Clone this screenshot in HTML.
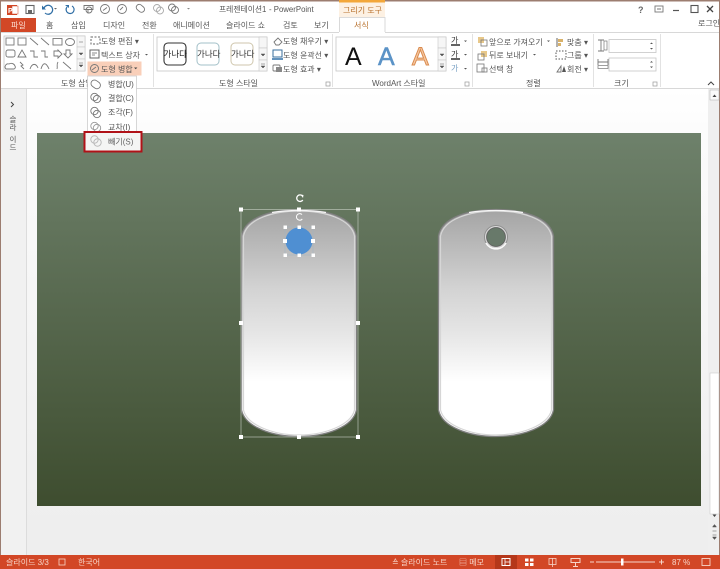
<!DOCTYPE html>
<html lang="ko"><head><meta charset="utf-8"><title>PowerPoint</title>
<style>
html,body{margin:0;padding:0;background:#fff}
svg{display:block;position:absolute;left:0;top:0;filter:blur(.35px)}
text{font-family:"Liberation Sans","Noto Sans CJK KR",sans-serif;font-size:8px;fill:#555}
.ic{fill:none;stroke:#777;stroke-width:.9}
</style></head><body>
<div style="position:relative;width:720px;height:569px;overflow:hidden">
<svg width="720" height="569" viewBox="0 0 720 569">
<defs>
<linearGradient id="sl" x1="0" y1="0" x2="0" y2="1"><stop offset="0" stop-color="#6e816b"/><stop offset="1" stop-color="#3e4d2f"/></linearGradient>
<linearGradient id="bg" x1="0" y1="0" x2="0" y2="1"><stop offset="0" stop-color="#fff"/><stop offset=".12" stop-color="#fbfbfb"/><stop offset=".95" stop-color="#eeeeee"/></linearGradient>
<linearGradient id="tag" x1="0" y1="0" x2="0" y2="1"><stop offset="0" stop-color="#a4a4a4"/><stop offset=".35" stop-color="#d3d3d3"/><stop offset=".55" stop-color="#e6e6e6"/><stop offset=".76" stop-color="#ffffff"/><stop offset="1" stop-color="#ffffff"/></linearGradient>
</defs>
<rect width="720" height="569" fill="#fff"/>
<rect x="0" y="0" width="720" height="1.500" fill="#9c7d70"/>
<rect x="0" y="0" width="1" height="569" fill="#9c7d70"/>
<rect x="719" y="0" width="1" height="569" fill="#9c7d70"/>

<!-- work area -->
<rect x="1" y="89" width="718" height="466" fill="url(#bg)"/>
<rect x="1" y="89" width="25" height="466" fill="#f1f1f1"/>
<rect x="26" y="89" width="1" height="466" fill="#dcdcdc"/>
<rect x="708" y="89" width="11" height="466" fill="#efefef"/>
<rect x="1" y="88" width="718" height="1" fill="#d8d8d8"/>
<rect x="710" y="373" width="9" height="141" fill="#fff" stroke="#ccc" stroke-width=".6"/>
<rect x="710" y="90" width="9" height="10" fill="#fafafa" stroke="#aaa" stroke-width=".5"/>
<path d="M712.500 97l2-2.500 2 2.500z" fill="#444"/>
<path d="M712.500 514.500l2 2.500 2-2.500z" fill="#444"/>
<path d="M712.500 527l2-2.500 2 2.500zM712.500 531h4" fill="#555" stroke="#555" stroke-width=".5"/>
<path d="M712.500 535h4M712.500 537l2 2.500 2-2.500z" fill="#555" stroke="#555" stroke-width=".5"/>

<!-- left thumb panel -->
<path d="M11 102l2.500 2.500-2.500 2.500" fill="none" stroke="#444" stroke-width="1"/>
<text style="font-size:7.500px">
<tspan x="9.500" y="122">슬</tspan><tspan x="9.500" y="130">라</tspan><tspan x="9.500" y="142">이</tspan><tspan x="9.500" y="150">드</tspan></text>

<!-- slide -->
<rect x="37" y="133" width="664" height="373" fill="url(#sl)"/>

<!-- left tag -->
<path d="M241.500 236C245 217 272 209.500 299 209.500C326 209.500 353 217 356.500 236V410C353 427 326 436.500 299 436.500C272 436.500 245 427 241.500 410Z" fill="url(#tag)" stroke="#7f7f7f" stroke-width="1.300"/>
<path d="M243.500 236C247 219 273 211 299 211C325 211 351 219 354.500 236V410C351 425 325 435 299 435C273 435 247 425 243.500 410Z" fill="none" stroke="#d6d6d6" stroke-width="1.200"/>
<path d="M272 212.500C281 211 290 210.500 299 210.500C308 210.500 317 211 326 212.500" fill="none" stroke="#f6f6f6" stroke-width="1.200"/>
<!-- selection -->
<rect x="241" y="209.500" width="117" height="227.500" fill="none" stroke="#c8cfc6" stroke-width=".6"/>
<circle cx="299" cy="241" r="13.500" fill="#4f8fd2"/>
<rect x="285" y="227" width="28" height="28" fill="none" stroke="#9fb4c4" stroke-width=".5"/>
<g fill="#fff">
<rect x="239" y="207.500" width="4" height="4"/><rect x="297" y="207.500" width="4" height="4"/><rect x="356" y="207.500" width="4" height="4"/>
<rect x="239" y="321" width="4" height="4"/><rect x="356" y="321" width="4" height="4"/>
<rect x="239" y="435" width="4" height="4"/><rect x="297" y="435" width="4" height="4"/><rect x="356" y="435" width="4" height="4"/>
<rect x="283.500" y="225.500" width="3.500" height="3.500"/><rect x="297.500" y="225.500" width="3.500" height="3.500"/><rect x="311.500" y="225.500" width="3.500" height="3.500"/>
<rect x="283" y="239" width="4" height="4"/><rect x="311" y="239" width="4" height="4"/>
<rect x="283.500" y="253.500" width="3.500" height="3.500"/><rect x="297.500" y="253.500" width="3.500" height="3.500"/><rect x="311.500" y="253.500" width="3.500" height="3.500"/>
</g>
<path d="M302.500 196A3.300 3.300 0 1 0 302.800 200" fill="none" stroke="#fff" stroke-width="1.300"/><path d="M300.500 194.500l3 .5-.5 3z" fill="#fff"/>
<path d="M302 214.500A3.300 3.300 0 1 0 302.300 219" fill="none" stroke="#fff" stroke-width="1"/>

<!-- right tag -->
<path d="M438.500 236C442 217 469 209.500 496 209.500C523 209.500 550 217 553.500 236V410C550 427 523 436.500 496 436.500C469 436.500 442 427 438.500 410Z" fill="url(#tag)" stroke="#7f7f7f" stroke-width="1.300"/>
<path d="M440.500 236C444 219 470 211 496 211C522 211 548 219 551.500 236V410C548 425 522 435 496 435C470 435 444 425 440.500 410Z" fill="none" stroke="#d6d6d6" stroke-width="1.200"/>
<path d="M469 212.500C478 211 487 210.500 496 210.500C505 210.500 514 211 523 212.500" fill="none" stroke="#f6f6f6" stroke-width="1.200"/>
<circle cx="496" cy="237" r="12" fill="#8f8f8f"/>
<path d="M486 243a11.500 11.500 0 0 0 20 0" fill="none" stroke="#fafafa" stroke-width="1.600"/>
<circle cx="496" cy="237" r="10.500" fill="none" stroke="#dcdcdc" stroke-width="1"/>
<circle cx="496" cy="237" r="9.300" fill="#68796a" stroke="#5a5a5a" stroke-width=".6"/>

<!-- status bar -->
<rect x="0" y="555" width="720" height="14" fill="#d24726"/>
<g>
<text x="6" y="565" style="fill:#f6d5c9">슬라이드 3/3</text>
<rect x="59" y="559" width="6" height="6" fill="none" stroke="#f6d5c9" stroke-width=".8"/>
<text x="78" y="565" style="fill:#f6d5c9">한국어</text>
<text x="392" y="565" style="fill:#f6d5c9">≙ 슬라이드 노트</text>
<text x="459" y="565" style="fill:#f6d5c9">▤ 메모</text>
<rect x="495" y="555" width="22" height="14" fill="#b5371a"/>
<rect x="502" y="558.500" width="8" height="7" fill="none" stroke="#fff" stroke-width="1"/><path d="M505 559v6M505 562h5" stroke="#fff" stroke-width=".8"/>
<path d="M525 558.500h3.500v3h-3.500zM530 558.500h3.500v3h-3.500zM525 563h3.500v3h-3.500zM530 563h3.500v3h-3.500z" fill="#fff"/>
<rect x="549" y="558.500" width="7" height="6" fill="none" stroke="#f6d5c9" stroke-width=".8"/><path d="M552.500 558v9" stroke="#f6d5c9" stroke-width=".8"/>
<path d="M571 558.500h9v4h-9zM575.500 562.500v4M573 566.500h5" fill="none" stroke="#f6d5c9" stroke-width="1"/>
<path d="M590 562h4M596 562h59M659 562h5M661.500 559.500v5" stroke="#f6d5c9" stroke-width="1"/>
<rect x="621" y="558.500" width="2.500" height="7" fill="#fff"/>
<text x="672" y="565" style="fill:#f6d5c9">87 %</text>
<rect x="702" y="558.500" width="8" height="7" fill="none" stroke="#f6d5c9" stroke-width=".9"/>
</g>

<!-- title bar -->
<rect x="7" y="5" width="10" height="10" fill="#d24726"/><rect x="12" y="6" width="6" height="8" fill="#fff" stroke="#d24726" stroke-width=".5"/>
<text x="8" y="13" style="fill:#fff;font-size:7px;font-weight:bold">P</text>
<rect x="26" y="5.500" width="8" height="8" fill="none" stroke="#666" stroke-width="1.100"/><rect x="28" y="10" width="4" height="3.500" fill="#666"/>
<path d="M44 8a4.500 4.500 0 1 1 1 5" fill="none" stroke="#2f6ea5" stroke-width="1.200"/><path d="M42 5.500v4h4z" fill="#2f6ea5"/><path d="M54 8l1.500 1.500L57 8z" fill="#666"/>
<path d="M72 6a4 4 0 1 1-5 1" fill="none" stroke="#2f6ea5" stroke-width="1.200"/><path d="M65 5h4v3z" fill="#2f6ea5"/>
<path d="M84 5.500h9v4h-9zM88 9.500v4" class="ic"/><circle cx="89" cy="10" r="3" class="ic"/>
<g class="ic"><circle cx="105" cy="9" r="4.500"/><path d="M103 10.500l4-3"/><circle cx="122" cy="9" r="4.500"/><path d="M120 10l3-3"/><rect x="136" y="5" width="9" height="6" rx="3" transform="rotate(40 140 8)"/><circle cx="157" cy="8" r="3.500" stroke="#aaa"/><circle cx="160" cy="10.500" r="3.500" stroke="#aaa"/><circle cx="172" cy="7.500" r="3.500"/><circle cx="175" cy="10" r="3.500"/></g>
<path d="M187 8l1.500 1.500L190 8z" fill="#888"/>
<text x="219" y="12" style="font-size:7.800px">프레젠테이션1</text>
<text x="269" y="12" style="font-size:7.800px">- PowerPoint</text>
<rect x="339" y="0" width="46" height="17" fill="#fdf1e3"/><rect x="339" y="0" width="46" height="2.500" fill="#f3a73a"/>
<text x="343" y="13" style="fill:#b8702b">그리기 도구</text>
<text x="638" y="13" style="font-weight:bold;fill:#666;font-size:9px">?</text>
<rect x="655" y="6" width="8" height="6" fill="none" stroke="#777" stroke-width=".9"/><path d="M657 9h4" stroke="#777"/>
<path d="M673 10.500h6" stroke="#555" stroke-width="1.200"/>
<rect x="691" y="5.500" width="7" height="7" fill="none" stroke="#555" stroke-width="1.100"/>
<path d="M707 6l6 6M713 6l-6 6" stroke="#444" stroke-width="1.300"/>

<!-- tabs -->
<rect x="1" y="18" width="35" height="14" fill="#d24726"/>
<text x="11" y="28" style="fill:#fbdcd0">파일</text>
<g>
<text x="46" y="28">홈</text><text x="71" y="28">삽입</text><text x="103" y="28">디자인</text><text x="142" y="28">전환</text><text x="173" y="28">애니메이션</text><text x="226" y="28">슬라이드 쇼</text><text x="283" y="28">검토</text><text x="314" y="28">보기</text>
<text x="698" y="26">로그인</text></g>
<path d="M339.500 32V17.500H385V32" fill="#fff" stroke="#d0d0d0" stroke-width=".8"/>
<text x="354" y="28" style="fill:#b8702b">서식</text>
<path d="M1 32.500H339M385 32.500H719" stroke="#d8d8d8" stroke-width="1"/>

<!-- ribbon: shapes gallery -->
<rect x="4" y="36" width="81" height="35" fill="#fff" stroke="#c6c6c6" stroke-width=".8"/>
<g class="ic">
<rect x="6" y="38" width="8" height="7"/><rect x="18" y="38" width="8" height="7"/><path d="M30 38l8 7M41 38l8 7"/><rect x="53" y="38.500" width="9" height="6.500"/><ellipse cx="70" cy="42" rx="4.500" ry="3.500"/>
<rect x="6" y="50" width="9" height="7" rx="2"/><path d="M18 57l4-7 4 7zM30 51h4v6h4M41 51h4v6h3M54 51h4v-1l4 4-4 4v-2h-4zM66 50h4v4h2l-4 4-4-4h2z"/>
<path d="M6 69a3 3 0 0 1 3-5 4 4 0 0 1 6 2 2 2 0 0 1-1 3zM20 62l3 3-2 1 3 3M30 69c2-6 6-6 8-1M41 69c2-7 5-7 8 0M58 62c-2 3 0 4-1 7M63 62l8 7"/></g>
<g fill="#f6f6f6" stroke="#c6c6c6" stroke-width=".6"><rect x="77" y="36" width="8" height="11"/><rect x="77" y="47" width="8" height="12"/><rect x="77" y="59" width="8" height="12"/></g>
<path d="M79 42h4M79 53l2 2 2-2zM79 63h4M79 65l2 2 2-2z" fill="#555" stroke="#555" stroke-width=".5"/>
<text x="61" y="86">도형 삽입</text>

<!-- edit shape buttons -->
<rect x="87.500" y="61.500" width="54" height="14" fill="#f9cfb9"/>
<g>
<rect x="91" y="37" width="9" height="7" fill="none" stroke="#666" stroke-dasharray="2 1.500"/>
<text x="101" y="44">도형 편집 ▾</text>
<rect x="90" y="50" width="9" height="8" fill="none" stroke="#666"/><path d="M92 53h5M92 55h3" stroke="#666" stroke-width=".7"/>
<text x="101" y="58">텍스트 상자</text><path d="M145 54l1.500 1.500L148 54z" fill="#555"/>
<circle cx="94.500" cy="68.500" r="4" class="ic"/><path d="M92 70l4-3" class="ic"/>
<text x="101" y="72">도형 병합</text><path d="M134 67.500l1.700 1.700 1.700-1.700z" fill="#444"/>
</g>

<!-- dropdown -->
<rect x="87.500" y="76" width="49" height="58" fill="#fff" stroke="#c6c6c6" stroke-width=".7"/>
<g class="ic">
<rect x="91" y="81" width="10" height="7" rx="3.500" transform="rotate(35 96 84)"/>
<circle cx="94.500" cy="97" r="3.700"/><circle cx="97" cy="99" r="3.700"/>
<circle cx="94.500" cy="111" r="3.700"/><circle cx="97" cy="114" r="3.700"/>
<circle cx="94.500" cy="126" r="3.700" stroke="#999"/><circle cx="97" cy="128" r="3.700" stroke="#999"/>
</g>
<g><text x="108" y="87">병합(U)</text><text x="108" y="101">결합(C)</text><text x="108" y="115">조각(F)</text><text x="108" y="130">교차(I)</text></g>

<!-- highlighted -->
<rect x="84.500" y="132" width="57" height="19.500" fill="#f4f5f4" stroke="#b01218" stroke-width="2"/>
<circle cx="94.500" cy="139.500" r="3.700" fill="none" stroke="#bbb"/><circle cx="97.500" cy="142.500" r="3.700" fill="none" stroke="#bbb"/>
<text x="108" y="144.500" style="fill:#666">빼기(S)</text>

<path d="M153.500 34v53" stroke="#e2e2e2"/>
<!-- shape styles -->
<rect x="157" y="37" width="110" height="34" fill="#fff" stroke="#c6c6c6" stroke-width=".8"/>
<rect x="164" y="43" width="22" height="22" rx="4" fill="#fff" stroke="#333" stroke-width="1.100"/>
<rect x="197" y="43" width="22" height="22" rx="4" fill="#fff" stroke="#a3c0c8" stroke-width="1"/>
<rect x="231" y="43" width="22" height="22" rx="4" fill="#fff" stroke="#cfc6ac" stroke-width="1"/>
<g><text x="163.500" y="57" style="fill:#222;font-size:8.500px">가나다</text><text x="197" y="57" style="fill:#333;font-size:8.500px">가나다</text><text x="231" y="57" style="fill:#333;font-size:8.500px">가나다</text></g>
<g fill="#f6f6f6" stroke="#c6c6c6" stroke-width=".6"><rect x="259" y="37" width="8" height="11"/><rect x="259" y="48" width="8" height="12"/><rect x="259" y="60" width="8" height="11"/></g>
<path d="M261 54l2 2 2-2zM261 64h4M261 66l2 2 2-2z" fill="#555" stroke="#555" stroke-width=".5"/>
<text x="219" y="86">도형 스타일</text>
<rect x="326" y="82" width="4" height="4" fill="none" stroke="#999" stroke-width=".7"/>
<g>
<path d="M274 42l4-4 4 4-3 3h-3z" class="ic"/><text x="283" y="44">도형 채우기 ▾</text>
<rect x="273" y="50" width="9" height="7" fill="none" stroke="#3a6f9e"/><path d="M272 59h11" stroke="#2f6ea5" stroke-width="1.500"/><text x="283" y="58">도형 윤곽선 ▾</text>
<rect x="273" y="65" width="7" height="6" rx="1" class="ic"/><rect x="276" y="67" width="6" height="5" fill="#888"/><text x="283" y="72">도형 효과 ▾</text>
</g>
<path d="M332.500 34v53" stroke="#e2e2e2"/>

<!-- wordart -->
<rect x="336" y="37" width="110" height="34" fill="#fff" stroke="#c6c6c6" stroke-width=".8"/>
<text x="345" y="65" style="font-size:25px;fill:#111">A</text>
<text x="378" y="65" style="font-size:25px;fill:#5b93c7;stroke:#5b93c7;stroke-width:.5">A</text>
<text x="412" y="65" style="font-size:25px;fill:#f7c9a2;stroke:#d98b4f;stroke-width:1">A</text>
<g fill="#f6f6f6" stroke="#c6c6c6" stroke-width=".6"><rect x="438" y="37" width="8" height="11"/><rect x="438" y="48" width="8" height="12"/><rect x="438" y="60" width="8" height="11"/></g>
<path d="M440 54l2 2 2-2zM440 64h4M440 66l2 2 2-2z" fill="#555" stroke="#555" stroke-width=".5"/>
<text x="372" y="86">WordArt 스타일</text>
<rect x="465" y="82" width="4" height="4" fill="none" stroke="#999" stroke-width=".7"/>
<text x="451" y="43" style="fill:#333">가</text><path d="M451 45h9" stroke="#111" stroke-width="1.300"/>
<text x="451" y="57" style="fill:#333">가</text><path d="M451 59h9" stroke="#111" stroke-width="1.300"/>
<text x="451" y="71" style="fill:#7aa1c4">가</text>
<path d="M464 40.500l1.500 1.500 1.500-1.500zM464 54l1.500 1.500 1.500-1.500zM464 68l1.500 1.500 1.500-1.500z" fill="#555"/>
<path d="M472.500 34v53" stroke="#e2e2e2"/>

<!-- arrange -->
<g>
<rect x="478" y="37" width="6" height="6" fill="#e8c88a"/><rect x="481" y="40" width="6" height="6" fill="none" stroke="#777" stroke-width=".8"/>
<text x="489" y="45">앞으로 가져오기</text><path d="M547 40.500l1.500 1.500 1.500-1.500z" fill="#555"/>
<rect x="481" y="51" width="6" height="6" fill="#e8c88a"/><rect x="478" y="54" width="6" height="6" fill="none" stroke="#777" stroke-width=".8"/>
<text x="489" y="58">뒤로 보내기</text><path d="M533 54l1.500 1.500 1.500-1.500z" fill="#555"/>
<rect x="477" y="64" width="7" height="8" fill="none" stroke="#777" stroke-width=".8"/><rect x="482" y="68" width="5" height="4" fill="none" stroke="#777" stroke-width=".8"/>
<text x="489" y="72">선택 창</text>
<path d="M557 38v9" stroke="#666"/><rect x="558" y="39" width="5" height="3" fill="#d9b26a"/><rect x="558" y="43" width="3" height="3" fill="#d9b26a"/>
<text x="567" y="45">맞춤 ▾</text>
<rect x="556" y="51" width="10" height="8" fill="none" stroke="#555" stroke-dasharray="1.500 1.500"/>
<text x="567" y="58">그룹 ▾</text>
<path d="M557 72l4-6v6z" class="ic"/><path d="M562 72l2-6 2 6z" fill="#555"/>
<text x="567" y="72">회전 ▾</text>
</g>
<text x="526" y="86">정렬</text>
<path d="M593.500 34v53" stroke="#e2e2e2"/>

<!-- size -->
<path d="M601 40v11M598 40h6M598 51h6" class="ic"/><rect x="604" y="41" width="3" height="9" fill="none" stroke="#777" stroke-width=".7"/>
<rect x="609" y="39.500" width="47" height="13" fill="#fff" stroke="#c6c6c6" stroke-width=".8"/>
<path d="M650 44l1.500-1.500 1.500 1.500zM650 48l1.500 1.500 1.500-1.500z" fill="#555"/>
<path d="M598 62h10M598 59v6M608 59v6" class="ic"/><rect x="598" y="65.500" width="10" height="3" fill="none" stroke="#777" stroke-width=".7"/>
<rect x="609" y="58" width="47" height="13" fill="#fff" stroke="#c6c6c6" stroke-width=".8"/>
<path d="M650 62.500l1.500-1.500 1.500 1.500zM650 66.500l1.500 1.500 1.500-1.500z" fill="#555"/>
<text x="614" y="86">크기</text>
<rect x="653" y="82" width="4" height="4" fill="none" stroke="#999" stroke-width=".7"/>
<path d="M660.500 34v53" stroke="#e2e2e2"/>
<path d="M708 85l3-3 3 3" fill="none" stroke="#444" stroke-width="1"/>
</svg>
</div>
</body></html>
